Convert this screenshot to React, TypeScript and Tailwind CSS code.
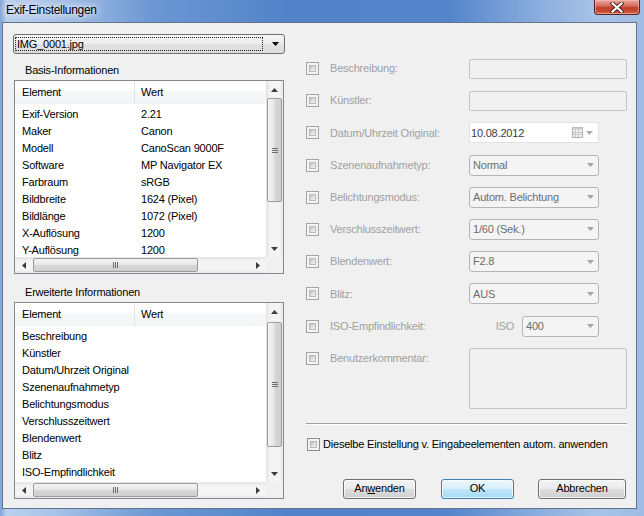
import React from "react";

const Arrow = ({ dir = "down", color = "#000" }: { dir?: "down" | "up" | "left" | "right"; color?: string }) => {
  const pts: Record<string, string> = {
    down: "0,0 7,0 3.5,4",
    up: "0,4 7,4 3.5,0",
    left: "4,0 4,7 0,3.5",
    right: "0,0 0,7 4,3.5",
  };
  const vertical = dir === "down" || dir === "up";
  return (
    <svg width={vertical ? 7 : 4} height={vertical ? 4 : 7} className="block">
      <polygon points={pts[dir]} fill={color} />
    </svg>
  );
};

const Check = ({ dark = false }: { dark?: boolean }) => (
  <div className={`w-[13px] h-[13px] shrink-0 border ${dark ? "border-[#8e8f8f]" : "border-[#a3a3a3]"} bg-[#f4f4f4] p-[2px]`}>
    <div className="w-full h-full border border-[#b9b9b9] bg-[linear-gradient(135deg,#c2c2c2,#e2e2e2_60%,#f2f2f2)]" />
  </div>
);

const VGrip = () => (
  <div className="flex flex-col gap-[1px] items-center">
    <div className="w-[6px] h-[1px] bg-[#6d6d6d]" />
    <div className="w-[6px] h-[1px] bg-[#6d6d6d]" />
    <div className="w-[6px] h-[1px] bg-[#6d6d6d]" />
  </div>
);

const HGrip = () => (
  <div className="flex flex-row gap-[1px] items-center">
    <div className="w-[1px] h-[6px] bg-[#6d6d6d]" />
    <div className="w-[1px] h-[6px] bg-[#6d6d6d]" />
    <div className="w-[1px] h-[6px] bg-[#6d6d6d]" />
  </div>
);

const VScroll = ({ gap, thumb }: { gap: number; thumb: number }) => (
  <div className="w-[17px] h-full flex flex-col bg-[linear-gradient(to_right,#e3e3e3,#f3f3f3_25%,#f5f5f5_75%,#e9e9e9)]">
    <div className="h-[17px] shrink-0 flex items-center justify-center">
      <Arrow dir="up" color="#3c3c3c" />
    </div>
    <div style={{ height: gap }} className="shrink-0" />
    <div
      style={{ height: thumb }}
      className="shrink-0 mx-[1px] rounded-[2px] border border-[#9c9c9c] bg-[linear-gradient(to_right,#f4f4f4,#e8e8e8_45%,#d6d6d6_55%,#cfcfcf)] flex items-center justify-center"
    >
      <VGrip />
    </div>
    <div className="flex-1" />
    <div className="h-[17px] shrink-0 flex items-center justify-center">
      <Arrow dir="down" color="#3c3c3c" />
    </div>
  </div>
);

const HScroll = () => (
  <div className="h-[16px] flex flex-row bg-[linear-gradient(to_bottom,#e3e3e3,#f3f3f3_25%,#f5f5f5_75%,#e9e9e9)]">
    <div className="w-[17px] shrink-0 flex items-center justify-center">
      <Arrow dir="left" color="#3c3c3c" />
    </div>
    <div className="w-[1px] shrink-0" />
    <div className="w-[165px] shrink-0 my-[1px] rounded-[2px] border border-[#9c9c9c] bg-[linear-gradient(to_bottom,#f4f4f4,#e8e8e8_45%,#d6d6d6_55%,#cfcfcf)] flex items-center justify-center">
      <HGrip />
    </div>
    <div className="flex-1" />
    <div className="w-[17px] shrink-0 flex items-center justify-center">
      <Arrow dir="right" color="#3c3c3c" />
    </div>
  </div>
);

type Row = [string, string];

const ListView = ({ rows, height, gap, thumb, pt }: { rows: Row[]; height: number; gap: number; thumb: number; pt: number }) => (
  <div style={{ height }} className="ml-[1px] w-[270px] border border-[#828790] bg-white flex flex-col">
    <div className="flex-1 flex flex-row min-h-0">
      <div className="w-[251px] overflow-hidden flex flex-col">
        <div className="h-[23px] shrink-0 flex flex-row bg-[linear-gradient(to_bottom,#ffffff,#ffffff_40%,#f6f7f8_45%,#f3f4f6)]">
          <div className="w-[120px] pl-[7px] flex items-center border-r border-[#e2e3e5]">Element</div>
          <div className="pl-[6px] flex items-center">Wert</div>
        </div>
        <div style={{ paddingTop: pt }}>
          {rows.map(([a, b]) => (
            <div key={a} className="h-[17px] flex flex-row items-center">
              <div className="w-[120px] pl-[7px] whitespace-nowrap">{a}</div>
              <div className="pl-[6px] whitespace-nowrap">{b}</div>
            </div>
          ))}
        </div>
      </div>
      <VScroll gap={gap} thumb={thumb} />
    </div>
    <div className="flex flex-row">
      <div className="w-[251px]">
        <HScroll />
      </div>
      <div className="w-[17px] h-[16px] bg-[#f0f0f0]" />
    </div>
  </div>
);

const TextBox = () => (
  <div className="w-[158px] h-[20px] rounded-[2px] border border-[#c3c3c3] bg-[#f0f0f0]" />
);

const Drop = ({ value, w = 130 }: { value: string; w?: number }) => (
  <div
    style={{ width: w }}
    className="h-[21px] rounded-[3px] border border-[#b5b5b5] bg-[#f4f4f4] flex flex-row items-center pl-[3px] pr-[4px] text-[#6d6d6d]"
  >
    <span className="flex-1 whitespace-nowrap">{value}</span>
    <Arrow color="#a3a3a3" />
  </div>
);

const DateBox = () => (
  <div className="w-[130px] h-[21px] border border-[#e2e2e2] bg-white flex flex-row items-center pl-[1px] pr-[5px] text-[#3c3c3c]">
    <span className="flex-1">10.08.2012</span>
    <svg width="11" height="11" className="block mr-[3px]">
      <rect x="0.5" y="0.5" width="10" height="10" fill="#f2f2f2" stroke="#b0b0b0" />
      <rect x="0.5" y="0.5" width="10" height="2" fill="#c8c8c8" />
      <path d="M3.5 3v7M6.5 3v7M1 5.5h9M1 7.5h9" stroke="#c8c8c8" strokeWidth="1" />
    </svg>
    <Arrow color="#b0b0b0" />
  </div>
);

const Label = ({ children }: { children: React.ReactNode }) => (
  <div className="w-[150px] pl-[11px] text-[#a0a0a0] whitespace-nowrap">{children}</div>
);

const Btn = ({ children, def = false, w }: { children: React.ReactNode; def?: boolean; w: number }) => (
  <div
    style={{ width: w }}
    className={`h-[20px] rounded-[3px] border ${
      def
        ? "border-[#3c7fb1] bg-[linear-gradient(to_bottom,#eaf6fd,#d9f0fc_50%,#bee6fd_50%,#a7d9f5)]"
        : "border-[#707070] bg-[linear-gradient(to_bottom,#f2f2f2,#ebebeb_50%,#dddddd_50%,#cfcfcf)]"
    } flex items-center justify-center shadow-[inset_0_0_0_1px_rgba(255,255,255,0.7)]`}
  >
    {children}
  </div>
);

const basis: Row[] = [
  ["Exif-Version", "2.21"],
  ["Maker", "Canon"],
  ["Modell", "CanoScan 9000F"],
  ["Software", "MP Navigator EX"],
  ["Farbraum", "sRGB"],
  ["Bildbreite", "1624 (Pixel)"],
  ["Bildlänge", "1072 (Pixel)"],
  ["X-Auflösung", "1200"],
  ["Y-Auflösung", "1200"],
];

const erweitert: Row[] = [
  ["Beschreibung", ""],
  ["Künstler", ""],
  ["Datum/Uhrzeit Original", ""],
  ["Szenenaufnahmetyp", ""],
  ["Belichtungsmodus", ""],
  ["Verschlusszeitwert", ""],
  ["Blendenwert", ""],
  ["Blitz", ""],
  ["ISO-Empfindlichkeit", ""],
];

export default function App() {
  return (
    <div className="w-[644px] h-[516px] overflow-hidden relative flex flex-col font-['Liberation_Sans',Arial,sans-serif] text-[11px] tracking-[-0.2px] text-black bg-[linear-gradient(to_right,#7fa3d6_0%,#b9cfee_1%,#a9c4e8_8%,#6b97d3_24%,#5283c9_45%,#5586cc_70%,#8fb1df_85%,#a8c3e7_93%,#9fbce4_100%)]">
      {/* title bar */}
      <div className="h-[22px] shrink-0 flex items-center pl-[6px] pb-[2px] text-[12px] tracking-[-0.3px] text-black [text-shadow:0_0_6px_#ffffff,0_0_10px_#ffffff]">
        Exif-Einstellungen
      </div>
      <div className="absolute top-0 right-[4px] w-[46px] h-[15px] rounded-b-[4px] border border-t-0 border-[#5a2222] bg-[linear-gradient(to_bottom,#e8a99f,#d4725f_40%,#c0402a_55%,#c64e36_85%,#d97a60)] flex items-center justify-center shadow-[inset_0_0_0_1px_rgba(255,200,190,0.5)]">
        <svg width="14" height="11" className="block">
          <path d="M2.5 1.5L11.5 9.5M11.5 1.5L2.5 9.5" stroke="#4a2020" strokeWidth="4" strokeLinecap="square" />
          <path d="M2.5 1.5L11.5 9.5M11.5 1.5L2.5 9.5" stroke="#ffffff" strokeWidth="2.2" strokeLinecap="square" />
        </svg>
      </div>

      {/* client area */}
      <div className="ml-[2px] mr-[7px] h-[487px] shrink-0 border border-[#62738c] bg-[#f0f0f0] flex flex-row">
        {/* left column */}
        <div className="pl-[10px] pt-[11px] w-[282px] flex flex-col">
          <div className="w-[272px] h-[20px] rounded-[3px] border border-[#707070] bg-[linear-gradient(to_bottom,#f4f4f4,#ececec_50%,#e2e2e2_50%,#dcdcdc)] flex flex-row items-center pl-[1px] pr-[5px]">
            <div className="w-[248px] h-[14px] border border-dotted border-[#222] flex items-center pl-[1px]">
              IMG_0001.jpg
            </div>
            <div className="flex-1" />
            <Arrow />
          </div>
          <div className="mt-[9px] pl-[12px] h-[14px] flex items-center">Basis-Informationen</div>
          <div className="mt-[3px]">
            <ListView rows={basis} height={194} gap={0} thumb={104} pt={2} />
          </div>
          <div className="mt-[11px] pl-[12px] h-[14px] flex items-center">Erweiterte Informationen</div>
          <div className="mt-[3px]">
            <ListView rows={erweitert} height={197} gap={2} thumb={125} pt={2} />
          </div>
        </div>

        {/* right column */}
        <div className="ml-[21px] w-[321px] pt-[35px] flex flex-col">
          <div className="flex flex-col gap-[11.2px]">
            <div className="h-[21px] flex flex-row items-center">
              <Check />
              <Label>Beschreibung:</Label>
              <TextBox />
            </div>
            <div className="h-[21px] flex flex-row items-center">
              <Check />
              <Label>Künstler:</Label>
              <TextBox />
            </div>
            <div className="h-[21px] flex flex-row items-center">
              <Check />
              <Label>Datum/Uhrzeit Original:</Label>
              <DateBox />
            </div>
            <div className="h-[21px] flex flex-row items-center">
              <Check />
              <Label>Szenenaufnahmetyp:</Label>
              <Drop value="Normal" />
            </div>
            <div className="h-[21px] flex flex-row items-center">
              <Check />
              <Label>Belichtungsmodus:</Label>
              <Drop value="Autom. Belichtung" />
            </div>
            <div className="h-[21px] flex flex-row items-center">
              <Check />
              <Label>Verschlusszeitwert:</Label>
              <Drop value="1/60 (Sek.)" />
            </div>
            <div className="h-[21px] flex flex-row items-center">
              <Check />
              <Label>Blendenwert:</Label>
              <Drop value="F2.8" />
            </div>
            <div className="h-[21px] flex flex-row items-center">
              <Check />
              <Label>Blitz:</Label>
              <Drop value="AUS" />
            </div>
            <div className="h-[21px] flex flex-row items-center">
              <Check />
              <Label>ISO-Empfindlichkeit:</Label>
              <div className="w-[130px] flex flex-row items-center justify-end">
                <span className="text-[#a0a0a0]">ISO</span>
                <div className="ml-[8px]">
                  <Drop value="400" w={77} />
                </div>
              </div>
            </div>
            <div className="h-[61px] flex flex-row items-start">
              <div className="h-[21px] flex flex-row items-center">
                <Check />
                <Label>Benutzerkommentar:</Label>
              </div>
              <div className="w-[158px] h-[61px] rounded-[2px] border border-[#c3c3c3] bg-[#f0f0f0]" />
            </div>
          </div>
          <div className="mt-[14px] h-0 border-t border-[#a0a0a0] border-b border-b-white" />
          <div className="mt-[13px] h-[13px] flex flex-row items-center pl-[1px]">
            <Check dark />
            <span className="ml-[3px] whitespace-nowrap">Dieselbe Einstellung v. Eingabeelementen autom. anwenden</span>
          </div>
          <div className="mt-[28px] flex flex-row">
            <div className="ml-[37px]">
              <Btn w={73}>
                <span>
                  An<span className="underline">w</span>enden
                </span>
              </Btn>
            </div>
            <div className="ml-[25px]">
              <Btn w={73} def>
                OK
              </Btn>
            </div>
            <div className="ml-[24px]">
              <Btn w={88}>Abbrechen</Btn>
            </div>
          </div>
        </div>
      </div>
    </div>
  );
}
